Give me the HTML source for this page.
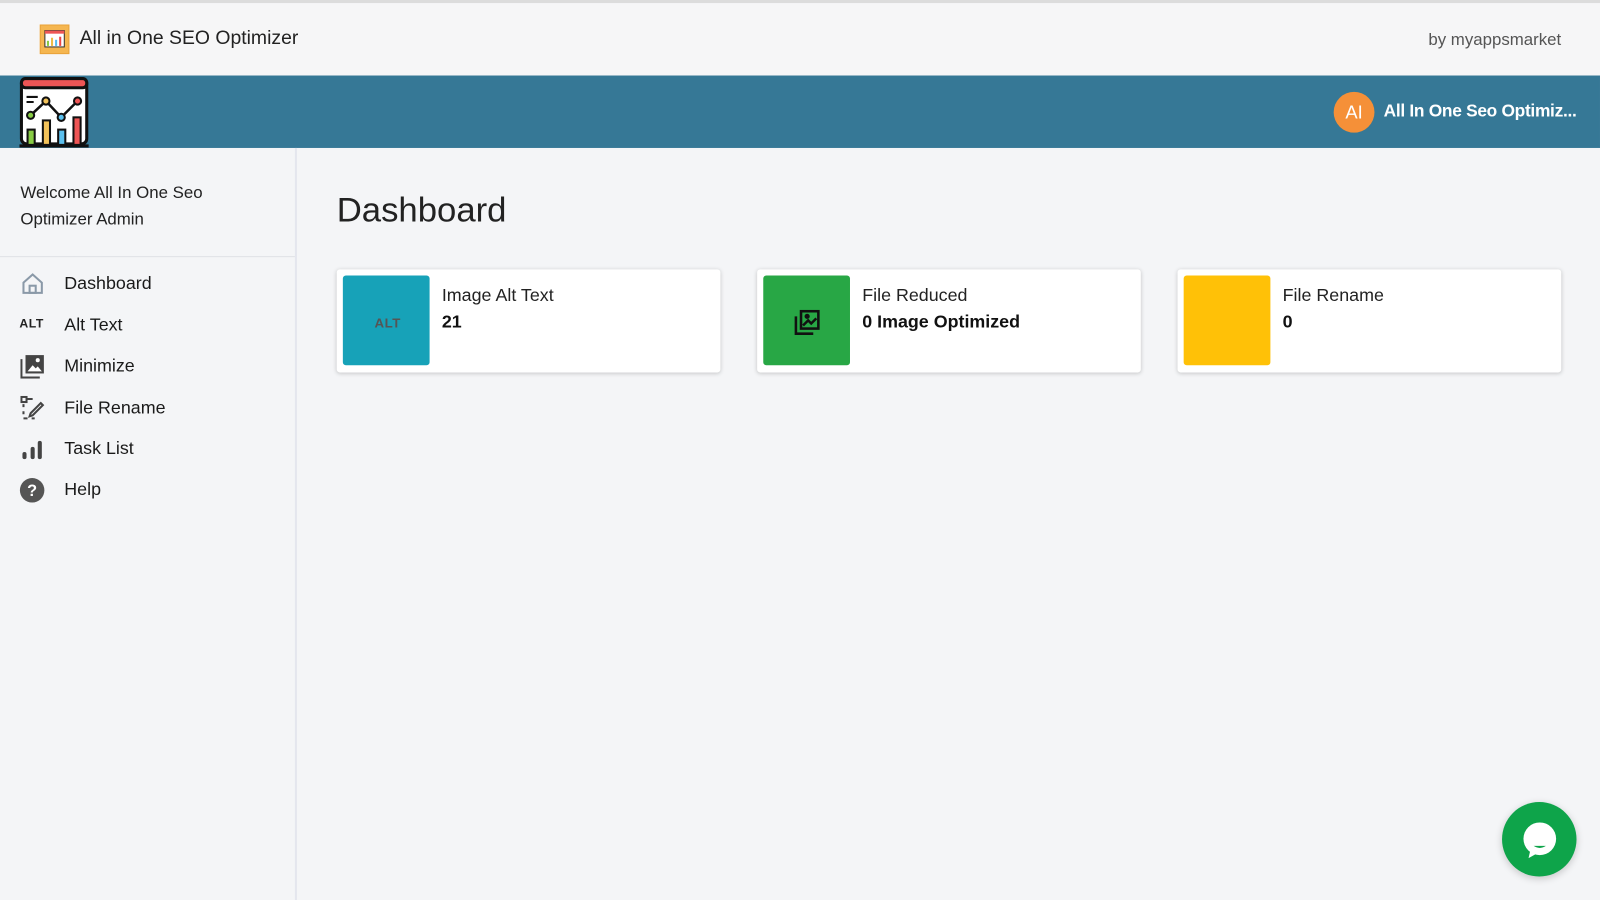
<!DOCTYPE html>
<html><head><meta charset="utf-8"><style>
*{box-sizing:border-box;margin:0;padding:0}
body{width:1600px;height:900px;background:#f4f5f7;font-family:"Segoe UI","Liberation Sans",sans-serif;overflow:hidden;position:relative}
.wrap{position:absolute;left:0;top:0;width:1568px;height:882px;background:#f4f5f7;transform:scale(1.0204);transform-origin:0 0}
.top{position:absolute;left:0;top:0;width:1568px;height:74px;background:#f6f6f7;border-top:3px solid #dcdcdc}
.top .t{position:absolute;left:78px;top:24px;font-size:19px;color:#222}
.top .by{position:absolute;right:38px;top:27px;font-size:16.5px;color:#555}
.ico{position:absolute;left:39px;top:21px;width:29px;height:29px;background:#f5b650;border:1px solid #e9a33a}
.blue{position:absolute;left:0;top:74px;width:1568px;height:71px;background:#367896}
.av{position:absolute;left:1307px;top:90px;width:40px;height:40px;border-radius:50%;background:#f59038;color:#fff;font-size:18px;text-align:center;line-height:40px}
.un{position:absolute;left:1356px;top:99px;color:#fff;font-size:17px;font-weight:600;letter-spacing:-.3px}
.side{position:absolute;left:0;top:145px;width:291px;height:737px;border-right:2px solid #e4e6ee}
.wel{padding:31px 20px 0;font-size:16.5px;color:#222;line-height:26px;height:107px;border-bottom:1px solid #dfe1e6}
.nav{position:absolute;left:0;font-size:17.5px;color:#1a1a1a}
.nav span{position:absolute;left:63px;top:1px;white-space:nowrap}
h1{position:absolute;left:330px;top:187px;font-size:34px;font-weight:500;color:#222}
.card{position:absolute;top:264px;width:376px;height:101px;background:#fff;border-radius:3px;box-shadow:0 1px 4px rgba(0,0,0,.2)}
.sq{position:absolute;left:6px;top:6px;width:85px;height:88px;border-radius:3px}
.c1{position:absolute;left:103px;top:15px;font-size:17.5px;color:#222}
.c2{position:absolute;left:103px;top:41px;font-size:17.5px;font-weight:700;color:#111}
.chat{position:absolute;left:1472px;top:786px;width:73px;height:73px;border-radius:50%;background:#0ea44a;box-shadow:0 2px 8px rgba(0,0,0,.2)}
</style></head><body>
<div class="wrap">
<div class="top"><div class="ico"><svg width="27" height="27" viewBox="0 0 27 27"><rect x="4" y="5" width="19" height="16" fill="#fff" stroke="#333"/><rect x="4" y="5" width="19" height="3" fill="#e55"/><rect x="6" y="15" width="2" height="5" fill="#8c4"/><rect x="10" y="12" width="2" height="8" fill="#eb4"/><rect x="14" y="14" width="2" height="6" fill="#5be"/><rect x="18" y="11" width="2" height="9" fill="#e44"/></svg></div><div class="t">All in One SEO Optimizer</div><div class="by">by myappsmarket</div></div>
<div class="blue"></div>
<svg style="position:absolute;left:19px;top:75px" width="68" height="70" viewBox="0 0 68 70">
<rect x="2" y="2" width="64" height="64" rx="5" fill="#fff" stroke="#111" stroke-width="3"/>
<rect x="2" y="2" width="64" height="9" rx="4" fill="#ee5555" stroke="#111" stroke-width="3"/>
<line x1="7" y1="20" x2="18" y2="20" stroke="#111" stroke-width="2"/><line x1="7" y1="25" x2="14" y2="25" stroke="#111" stroke-width="2"/>
<polyline points="11,38 26,24 41,40 57,24" fill="none" stroke="#111" stroke-width="2.5"/>
<circle cx="11" cy="38" r="3.5" fill="#8c4" stroke="#111" stroke-width="2"/><circle cx="26" cy="24" r="3.5" fill="#f2c25a" stroke="#111" stroke-width="2"/><circle cx="41" cy="40" r="3.5" fill="#5bc0ee" stroke="#111" stroke-width="2"/><circle cx="57" cy="24" r="3.5" fill="#ee5555" stroke="#111" stroke-width="2"/>
<rect x="8" y="52" width="7" height="15" fill="#8c4" stroke="#111" stroke-width="2"/><rect x="23" y="43" width="7" height="24" fill="#f2c25a" stroke="#111" stroke-width="2"/><rect x="38" y="52" width="7" height="15" fill="#5bc0ee" stroke="#111" stroke-width="2"/><rect x="53" y="40" width="7" height="27" fill="#ee5555" stroke="#111" stroke-width="2"/>
<line x1="0" y1="68" x2="68" y2="68" stroke="#111" stroke-width="3"/></svg>
<div class="av">AI</div><div class="un">All In One Seo Optimiz...</div>
<div class="side"><div class="wel">Welcome All In One Seo<br>Optimizer Admin</div></div>
<div class="nav" style="top:266px"><svg style="position:absolute;left:20px;top:0" width="24" height="24" viewBox="0 0 24 24" fill="none" stroke="#8a99a8" stroke-width="2"><path d="M3 11L12 3l9 8v10H3z"/><rect x="9" y="14" width="6" height="7"/></svg><span>Dashboard</span></div>
<div class="nav" style="top:307px"><b style="position:absolute;left:19px;top:3px;font-size:12px;color:#222;letter-spacing:.5px">ALT</b><span>Alt Text</span></div>
<div class="nav" style="top:347px"><svg style="position:absolute;left:20px;top:0" width="24" height="24" viewBox="0 0 24 24"><path d="M1 5v18h18" fill="none" stroke="#444" stroke-width="2"/><rect x="5" y="1" width="18" height="18" fill="#444"/><path d="M7 17l5-6 3 3 2-2 4 5z" fill="#fff"/><circle cx="17" cy="6" r="2" fill="#fff"/></svg><span>Minimize</span></div>
<div class="nav" style="top:388px"><svg style="position:absolute;left:20px;top:0" width="24" height="24" viewBox="0 0 24 24" fill="none" stroke="#444" stroke-width="2"><rect x="1" y="1" width="5" height="5"/><path d="M6 3h6M3 8v3M3 15v3M3 22h4M11 22h3M10 17l10-10 2 2-10 10-3 1z"/></svg><span>File Rename</span></div>
<div class="nav" style="top:428px"><svg style="position:absolute;left:20px;top:2px" width="24" height="22" viewBox="0 0 24 22" fill="#444"><rect x="2" y="13" width="4" height="7" rx="2"/><rect x="10" y="8" width="4" height="12" rx="2"/><rect x="17" y="2" width="4" height="18" rx="2"/></svg><span>Task List</span></div>
<div class="nav" style="top:468px"><svg style="position:absolute;left:19px;top:0" width="25" height="25" viewBox="0 0 25 25"><circle cx="12.5" cy="12.5" r="12" fill="#555"/><text x="12.5" y="18" text-anchor="middle" font-size="16" font-weight="700" fill="#fff" font-family="Liberation Sans">?</text></svg><span>Help</span></div>
<h1>Dashboard</h1>
<div class="card" style="left:330px"><div class="sq" style="background:#17a2b8"><b style="position:absolute;left:31px;top:39px;font-size:13px;color:#555;letter-spacing:.5px">ALT</b></div><div class="c1">Image Alt Text</div><div class="c2">21</div></div>
<div class="card" style="left:742px"><div class="sq" style="background:#28a745"><svg style="position:absolute;left:29px;top:32px" width="28" height="28" viewBox="0 0 28 28" fill="none" stroke="#111" stroke-width="2.5"><path d="M3 8v17h17"/><rect x="8" y="3" width="17" height="17"/><path d="M10 17l5-5 3 3 5-5"/><circle cx="14" cy="8" r="1.3" fill="#111"/></svg></div><div class="c1">File Reduced</div><div class="c2">0 Image Optimized</div></div>
<div class="card" style="left:1154px"><div class="sq" style="background:#ffc107"></div><div class="c1">File Rename</div><div class="c2">0</div></div>
<div class="chat"><svg style="position:absolute;left:18px;top:19px" width="38" height="38" viewBox="0 0 38 38"><circle cx="19" cy="17" r="16" fill="#fff"/><path d="M10 27l-2 9 9-5z" fill="#fff"/><path d="M13 24q6 4 12 0z" fill="#0ea44a"/></svg></div>
</div>
</body></html>
